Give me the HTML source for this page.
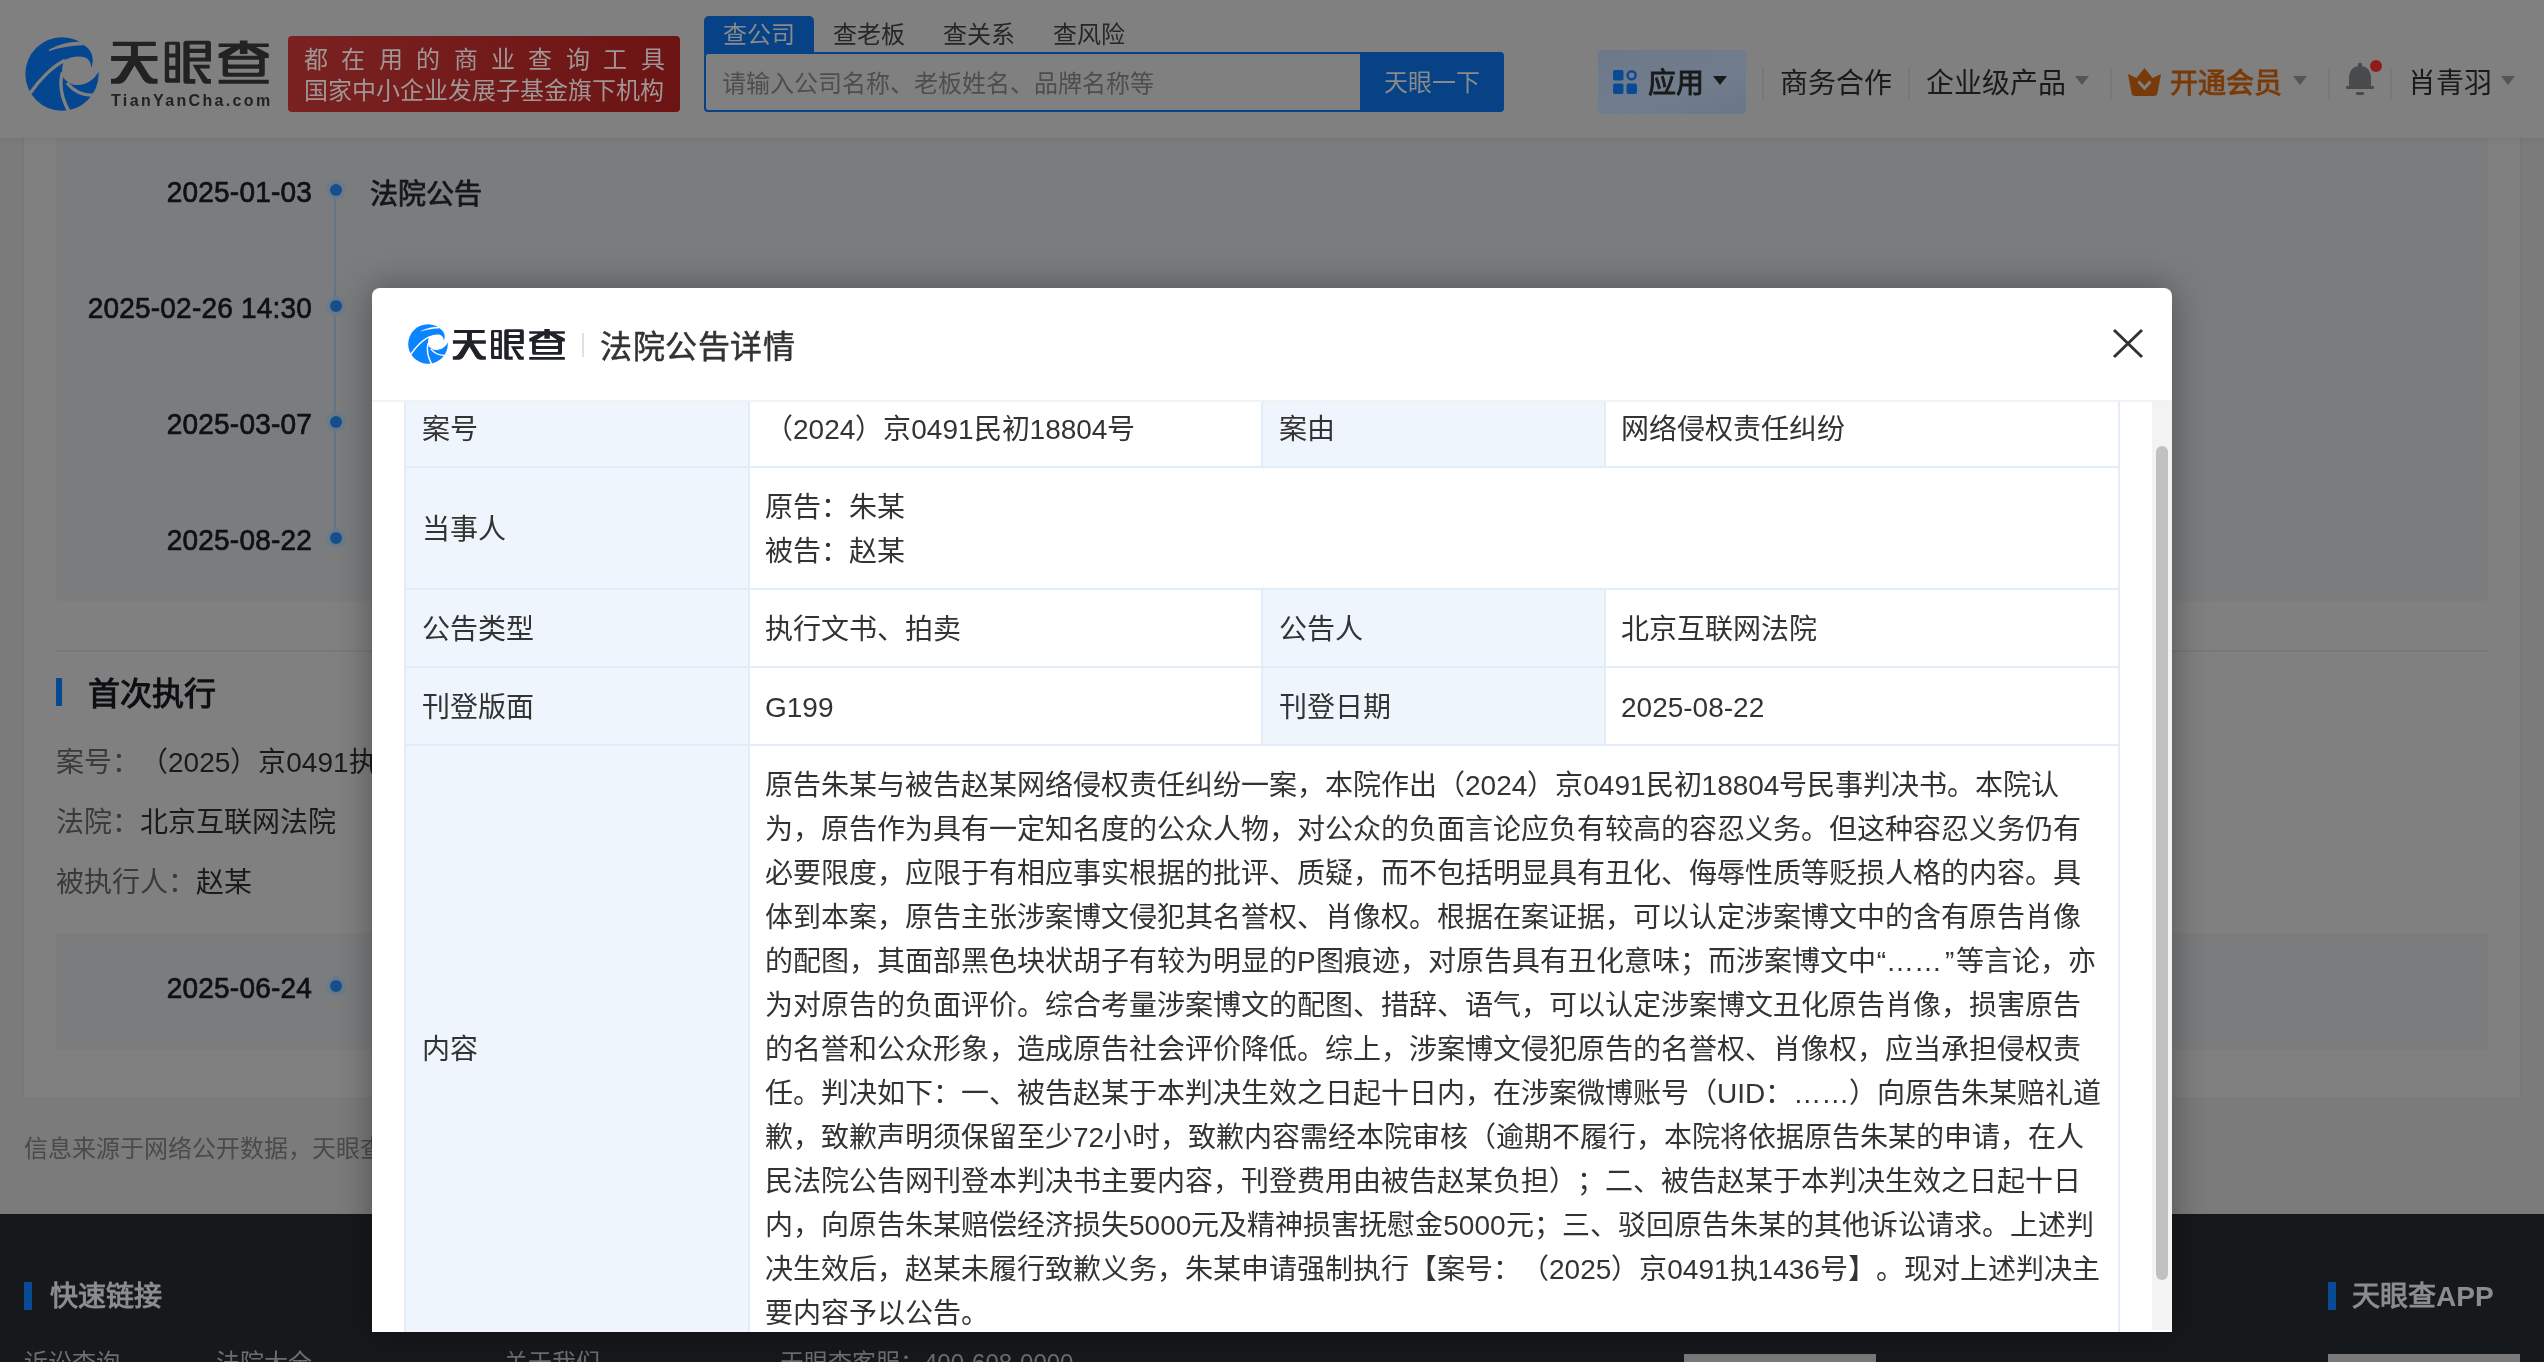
<!DOCTYPE html>
<html lang="zh-CN">
<head>
<meta charset="utf-8">
<style>
html,body{margin:0;padding:0;width:2544px;height:1362px;overflow:hidden;background:#7b7b7b;font-family:"Liberation Sans",sans-serif;text-spacing-trim:space-all;}
.a{position:absolute;white-space:nowrap;}
.a,.cell{will-change:transform}
#hdr{left:0;top:0;width:2544px;height:138px;background:#808080;box-shadow:0 2px 6px rgba(0,0,0,0.06);z-index:2}
#card{left:23px;top:100px;width:2496px;height:997px;background:#808080;border:1px solid #777;}
.tlbox{background:#7b7c7e;border-radius:4px;}
.date{font-size:28px;font-weight:normal;-webkit-text-stroke:0.7px #0f1114;letter-spacing:0.2px;color:#0f1114;text-align:right;line-height:40px;transform:scaleY(1.05);transform-origin:0 22px}
.dot{width:20px;height:20px;border-radius:50%;background:#6b7a89;}
.dot i{position:absolute;left:4px;top:4px;width:12px;height:12px;border-radius:50%;background:#164f8c;}
#footer{left:0;top:1214px;width:2544px;height:148px;background:#16191c;}
#modal{left:372px;top:288px;width:1800px;height:1044px;background:#fff;border-radius:8px 8px 0 0;box-shadow:0 0 36px rgba(0,0,0,0.36);z-index:10;overflow:hidden}
.cell{position:absolute;box-sizing:border-box;font-size:28px;line-height:44px;color:#333;white-space:nowrap}
.lab{background:#eef5fc;}
.hz{z-index:3}
.tri{width:0;height:0;border-left:7px solid transparent;border-right:7px solid transparent;border-top:9px solid #555;}
.dv{top:68px;width:2px;height:31px;background:#787878}
.val{background:#fff;padding-left:15px!important}
</style>
</head>
<body>
<svg width="0" height="0" style="position:absolute">
 <defs>
  <mask id="tycm" maskUnits="userSpaceOnUse" x="0" y="0" width="140" height="140">
   <rect x="0" y="0" width="140" height="140" fill="#fff"/>
   <g fill="#000" stroke="#000">
    <path d="M70 48 C80 42 97 40 105 46 C109 50 110 54 110.5 59 C113 53 115 40 106 30 C101 26 98 24 94 22 L94 16 L126 36 L126 61.5 L122.5 62 C117 76 104 85 90 85 C80 85 71 79 67 71 C66 62 67 54 70 48 Z" stroke="none"/>
    
    <path d="M71 48 C52 57 32 78 19 97" fill="none" stroke-width="4"/>
    <path d="M67 66 C62 85 66 105 77 125" fill="none" stroke-width="4"/>
    <path d="M74 82 C84 94 98 101 114 100" fill="none" stroke-width="4"/>
    <path d="M47 33 C62 25 80 20 97 21.5 L97 24.5 C80 25 63 28 47 33 Z" stroke-width="0.8"/>
   </g>
  </mask>
  <mask id="tycm2" maskUnits="userSpaceOnUse" x="0" y="0" width="140" height="140">
   <rect x="0" y="0" width="140" height="140" fill="#fff"/>
   <g fill="#000" stroke="#000">
    <path d="M70 48 C80 42 97 40 105 46 C109 50 110 54 110.5 59 C113 53 115 40 106 30 C101 26 98 24 94 22 L94 16 L126 36 L126 61.5 L122.5 62 C117 76 104 85 90 85 C80 85 71 79 67 71 C66 62 67 54 70 48 Z" stroke="none"/>
    
    <path d="M71 48 C52 57 32 78 19 97" fill="none" stroke-width="5"/>
    <path d="M67 66 C62 85 66 105 77 125" fill="none" stroke-width="5"/>
    <path d="M74 82 C84 94 98 101 114 100" fill="none" stroke-width="5"/>
    <path d="M47 33 C62 25 80 20 97 21.5 L97 24.5 C80 25 63 28 47 33 Z" stroke-width="2"/>
   </g>
  </mask>
  <g id="tycg2"><circle cx="66.5" cy="68.5" r="55" mask="url(#tycm2)"/></g>
  <symbol id="tyct" viewBox="0 0 254.4 76.3">
   <path fill-rule="evenodd" d="M8.8 8.5 H73.5 V15 H46.5 V30 H76 V37.5 H50 L63 58 C66 62 69 64 72 64 H76 V71.5 H65 C60 71.5 57 69 54 65 L41.5 44 L29 65 C26 69 23 71.5 18 71.5 H6 V64 H10 C13 64 16 62 19 58 L32 37.5 H6.2 V30 H36 V15 H8.8 Z
    M90 8.5 H107 Q110 8.5 110 11.5 V70 H90 Q87 70 87 67 V11.5 Q87 8.5 90 8.5 Z M93.5 13 V26 H103 V13 Z M93.5 32 V44.5 H103 V32 Z M93.5 50.5 V61 Q93.5 63.5 96 63.5 H103 V50.5 Z
    M119 7 H152.5 Q156.5 7 156.5 11 V38 H124.5 V64.5 H133 V71.5 H119 Q115 71.5 115 67.5 V11 Q115 7 119 7 Z M124.5 12.5 V19 H148 V12.5 Z M124.5 25.5 V32 H148 V25.5 Z
    M129 43 H154.5 V48.5 H139.5 L151.5 64.5 H156.5 V71.5 H148 C146 71.5 145 71 144 69.5 Z
    M200 6.5 H211.5 V11 H243.5 V16.5 H224 L243.5 26.5 V33 H237.5 V57 Q237.5 61 233.5 61 H178 Q174 61 174 57 V33 H168 V26.5 L187 16.5 H168 V11 H200 Z
    M184 29.5 L200 19 V27 H211.5 V19 L227 29.5 Z
    M182 35.5 V40.5 Q182 42.5 184 42.5 H227 Q229 42.5 229 40.5 V35.5 Z M182 49 V53 Q182 55 184 55 H227 Q229 55 229 53 V49 Z
    M168 65.5 H243.5 V71.5 H168 Z"/>
  </symbol>
  <g id="tycg"><circle cx="66.5" cy="68.5" r="55" mask="url(#tycm)"/></g>
 </defs>
</svg>
<!-- HEADER -->
<div id="hdr" class="a"></div>
<svg class="a" style="left:25px;top:37px;z-index:3" width="74" height="74" viewBox="11 13 111 111"><use href="#tycg2" fill="#054690"/></svg>
<svg class="a" style="left:107px;top:36px;z-index:3" width="169" height="51"><use href="#tyct" fill="#222"/></svg>
<div class="a hz" style="left:111px;top:90px;font-size:16px;line-height:22px;font-weight:bold;color:#222;letter-spacing:2.35px">TianYanCha.com</div>
<div class="a hz" style="left:288px;top:36px;width:392px;height:76px;border-radius:4px;background:linear-gradient(100deg,#7a2222,#6c1313)"></div>
<div class="a hz" style="left:304px;top:44px;font-size:24px;line-height:32px;color:#a09696;letter-spacing:13.4px">都在用的商业查询工具</div>
<div class="a hz" style="left:304px;top:75px;font-size:24px;line-height:32px;color:#a09696">国家中小企业发展子基金旗下机构</div>
<div class="a hz" style="left:704px;top:16px;width:110px;height:38px;border-radius:5px 5px 0 0;background:#064285"></div>
<div class="a hz" style="left:723px;top:19px;font-size:24px;line-height:32px;color:#8a8a8a">查公司</div>
<div class="a hz" style="left:833px;top:19px;font-size:24px;line-height:32px;color:#262626">查老板</div>
<div class="a hz" style="left:943px;top:19px;font-size:24px;line-height:32px;color:#262626">查关系</div>
<div class="a hz" style="left:1053px;top:19px;font-size:24px;line-height:32px;color:#262626">查风险</div>
<div class="a hz" style="left:704px;top:52px;width:656px;height:60px;box-sizing:border-box;border:2px solid #064285;border-right:none;border-radius:4px 0 0 4px;background:#808080"></div>
<div class="a hz" style="left:722px;top:68px;font-size:24px;line-height:32px;color:#4d4d4d">请输入公司名称、老板姓名、品牌名称等</div>
<div class="a hz" style="left:1360px;top:52px;width:144px;height:60px;border-radius:0 4px 4px 0;background:#064285"></div>
<div class="a hz" style="left:1384px;top:67px;font-size:24px;line-height:32px;color:#8a8a8a">天眼一下</div>
<div class="a hz" style="left:1598px;top:50px;width:148px;height:64px;border-radius:4px;background:linear-gradient(160deg,#6d7889,#717d8c 60%,#6a7789)"></div>
<svg class="a hz" style="left:1613px;top:70px" width="24" height="24" viewBox="0 0 24 24"><rect x="0" y="0" width="10.5" height="10.5" rx="2" fill="#0a4a94"/><circle cx="18.6" cy="5.3" r="4" fill="none" stroke="#0a4a94" stroke-width="2.4"/><rect x="0" y="13.5" width="10.5" height="10.5" rx="2" fill="#0a4a94"/><rect x="13.5" y="13.5" width="10.5" height="10.5" rx="2" fill="#0a4a94"/></svg>
<div class="a hz" style="left:1648px;top:64px;font-size:28px;line-height:40px;font-weight:normal;-webkit-text-stroke:0.9px currentColor;color:#1a1a1a">应用</div>
<div class="a hz tri" style="left:1713px;top:76px;border-top-color:#1a1a1a"></div>
<div class="a hz dv" style="left:1762px"></div>
<div class="a hz" style="left:1780px;top:64px;font-size:28px;line-height:40px;color:#1a1a1a">商务合作</div>
<div class="a hz dv" style="left:1908px"></div>
<div class="a hz" style="left:1926px;top:64px;font-size:28px;line-height:40px;color:#1a1a1a">企业级产品</div>
<div class="a hz tri" style="left:2075px;top:76px"></div>
<div class="a hz dv" style="left:2110px"></div>
<svg class="a hz" style="left:2128px;top:68px" width="33" height="28" viewBox="0 0 33 28"><path d="M0 6 L8.5 10 L16.5 0 L24.5 10 L33 6 L29.5 25 Q29 28 26 28 H7 Q4 28 3.5 25 Z" fill="#783a0b"/><path d="M10.5 13.5 L16.5 20 L22.5 13.5" fill="none" stroke="#808080" stroke-width="3"/></svg>
<div class="a hz" style="left:2170px;top:64px;font-size:28px;line-height:40px;font-weight:normal;-webkit-text-stroke:0.9px currentColor;color:#7a3a07">开通会员</div>
<div class="a hz tri" style="left:2293px;top:76px"></div>
<div class="a hz dv" style="left:2328px"></div>
<svg class="a hz" style="left:2346px;top:63px" width="28" height="33" viewBox="0 0 28 33"><rect x="12" y="0" width="4" height="4" rx="1" fill="#4a4b4d"/><path d="M14 3 C6 3 3 9 3 15 V24 H25 V15 C25 9 22 3 14 3 Z" fill="#4a4b4d"/><rect x="0" y="23" width="28" height="3" rx="1" fill="#4a4b4d"/><rect x="10" y="29" width="8" height="3" rx="1" fill="#4a4b4d"/></svg>
<div class="a hz" style="left:2370px;top:60px;width:12px;height:12px;border-radius:50%;background:#8e1c1c"></div>
<div class="a hz dv" style="left:2390px"></div>
<div class="a hz" style="left:2408px;top:64px;font-size:28px;line-height:40px;color:#1a1a1a">肖青羽</div>
<div class="a hz tri" style="left:2501px;top:76px"></div>


<!-- CONTENT -->
<div id="card" class="a"></div>
<div class="a tlbox" style="left:56px;top:120px;width:2432px;height:481px"></div>
<div class="a" style="left:334px;top:192px;width:2px;height:348px;background:#637587"></div>
<div class="a dot" style="left:326px;top:180px"><i></i></div>
<div class="a dot" style="left:326px;top:296px"><i></i></div>
<div class="a dot" style="left:326px;top:412px"><i></i></div>
<div class="a dot" style="left:326px;top:528px"><i></i></div>
<div class="a date" style="left:0;width:312px;top:173px">2025-01-03</div>
<div class="a date" style="left:0;width:312px;top:289px">2025-02-26 14:30</div>
<div class="a date" style="left:0;width:312px;top:405px">2025-03-07</div>
<div class="a date" style="left:0;width:312px;top:521px">2025-08-22</div>
<div class="a" style="left:370px;top:175px;font-size:28px;line-height:40px;font-weight:normal;-webkit-text-stroke:0.8px currentColor;color:#15171a">法院公告</div>
<div class="a" style="left:56px;top:650px;width:2432px;height:2px;background:#797979"></div>
<div class="a" style="left:56px;top:678px;width:6px;height:28px;background:#044a93"></div>
<div class="a" style="left:88px;top:674px;font-size:32px;line-height:40px;font-weight:bold;color:#0d0f12">首次执行</div>
<div class="a" style="left:56px;top:743px;font-size:28px;line-height:40px;color:#3a3a3a">案号：<span style="color:#1a1a1a">（2025）京0491执1436号</span></div>
<div class="a" style="left:56px;top:803px;font-size:28px;line-height:40px;color:#3a3a3a">法院：<span style="color:#1a1a1a">北京互联网法院</span></div>
<div class="a" style="left:56px;top:863px;font-size:28px;line-height:40px;color:#3a3a3a">被执行人：<span style="color:#1a1a1a">赵某</span></div>
<div class="a tlbox" style="left:56px;top:933px;width:2432px;height:117px"></div>
<div class="a dot" style="left:326px;top:976px"><i></i></div>
<div class="a date" style="left:0;width:312px;top:969px">2025-06-24</div>
<div class="a" style="left:24px;top:1132px;font-size:24px;line-height:34px;color:#4a4a4a">信息来源于网络公开数据，天眼查不对数据的准确性做任何保证</div>

<!-- FOOTER -->
<div id="footer" class="a"></div>
<div class="a" style="left:24px;top:1282px;width:8px;height:28px;background:#0a4a94"></div>
<div class="a" style="left:50px;top:1277px;font-size:28px;line-height:40px;font-weight:bold;color:#8c8c8c">快速链接</div>
<div class="a" style="left:2328px;top:1282px;width:8px;height:28px;background:#0a4a94"></div>
<div class="a" style="left:2352px;top:1277px;font-size:28px;line-height:40px;font-weight:bold;color:#8c8c8c">天眼查APP</div>

<div class="a" style="left:24px;top:1346px;font-size:24px;line-height:34px;color:#6e6e6e">诉讼查询</div>
<div class="a" style="left:216px;top:1346px;font-size:24px;line-height:34px;color:#6e6e6e">法院大全</div>
<div class="a" style="left:504px;top:1346px;font-size:24px;line-height:34px;color:#6e6e6e">关于我们</div>
<div class="a" style="left:780px;top:1346px;font-size:24px;line-height:34px;color:#6e6e6e">天眼查客服：400-608-0000</div>
<div class="a" style="left:1684px;top:1354px;width:192px;height:20px;background:#7a7a7a"></div>
<div class="a" style="left:2328px;top:1354px;width:192px;height:20px;background:#7a7a7a"></div>

<!-- MODAL -->
<div id="modal" class="a">
 <svg class="a" style="left:36px;top:36px" width="40" height="40" viewBox="11 13 111 111"><use href="#tycg" fill="#0a84ff"/></svg>
 <svg class="a" style="left:78px;top:38px" width="120" height="36"><use href="#tyct" fill="#1f2329"/></svg>
 <div class="a" style="left:210px;top:45px;width:2px;height:24px;background:#dde1e6"></div>
 <div class="a" style="left:228px;top:37px;font-size:32px;line-height:44px;font-weight:normal;-webkit-text-stroke:0.5px currentColor;color:#333;letter-spacing:0.6px">法院公告详情</div>
 <svg class="a" style="left:1738px;top:38px" width="36" height="36" viewBox="0 0 36 36"><path d="M4 4L32 31M32 4L4 31" stroke="#333" stroke-width="3" fill="none"/></svg>
 <div class="a" style="left:0;top:112px;width:1800px;height:2px;background:#f2f2f2"></div>
 <div class="a" style="left:0;top:114px;width:1800px;height:930px;overflow:hidden">
  <div class="a" style="left:32px;top:-14px;width:1716px;height:1000px;background:#e3edf7">
   <div class="cell lab" style="left:2px;top:2px;width:342px;height:76px;padding:18px 16px 0 16px">案号</div>
   <div class="cell val" style="left:346px;top:2px;width:511px;height:76px;padding:18px 16px 0 16px">（2024）京0491民初18804号</div>
   <div class="cell lab" style="left:859px;top:2px;width:341px;height:76px;padding:18px 16px 0 16px">案由</div>
   <div class="cell val" style="left:1202px;top:2px;width:512px;height:76px;padding:18px 16px 0 16px">网络侵权责任纠纷</div>
   <div class="cell lab" style="left:2px;top:80px;width:342px;height:120px;padding:40px 16px 0 16px">当事人</div>
   <div class="cell val" style="left:346px;top:80px;width:1368px;height:120px;padding:18px 16px 0 16px">原告：朱某<br>被告：赵某</div>
   <div class="cell lab" style="left:2px;top:202px;width:342px;height:76px;padding:18px 16px 0 16px">公告类型</div>
   <div class="cell val" style="left:346px;top:202px;width:511px;height:76px;padding:18px 16px 0 16px">执行文书、拍卖</div>
   <div class="cell lab" style="left:859px;top:202px;width:341px;height:76px;padding:18px 16px 0 16px">公告人</div>
   <div class="cell val" style="left:1202px;top:202px;width:512px;height:76px;padding:18px 16px 0 16px">北京互联网法院</div>
   <div class="cell lab" style="left:2px;top:280px;width:342px;height:76px;padding:18px 16px 0 16px">刊登版面</div>
   <div class="cell val" style="left:346px;top:280px;width:511px;height:76px;padding:18px 16px 0 16px">G199</div>
   <div class="cell lab" style="left:859px;top:280px;width:341px;height:76px;padding:18px 16px 0 16px">刊登日期</div>
   <div class="cell val" style="left:1202px;top:280px;width:512px;height:76px;padding:18px 16px 0 16px">2025-08-22</div>
   <div class="cell lab" style="left:2px;top:358px;width:342px;height:604px;padding:282px 16px 0 16px">内容</div>
   <div class="cell val" style="left:346px;top:358px;width:1368px;height:604px;padding:18px 16px 0 16px">原告朱某与被告赵某网络侵权责任纠纷一案，本院作出（2024）京0491民初18804号民事判决书。本院认<br>为，原告作为具有一定知名度的公众人物，对公众的负面言论应负有较高的容忍义务。但这种容忍义务仍有<br>必要限度，应限于有相应事实根据的批评、质疑，而不包括明显具有丑化、侮辱性质等贬损人格的内容。具<br>体到本案，原告主张涉案博文侵犯其名誉权、肖像权。根据在案证据，可以认定涉案博文中的含有原告肖像<br>的配图，其面部黑色块状胡子有较为明显的P图痕迹，对原告具有丑化意味；而涉案博文中<span style="margin-left:1px">“</span>……<span style="margin:0 2px 0 3px">”</span>等言论，亦<br>为对原告的负面评价。综合考量涉案博文的配图、措辞、语气，可以认定涉案博文丑化原告肖像，损害原告<br>的名誉和公众形象，造成原告社会评价降低。综上，涉案博文侵犯原告的名誉权、肖像权，应当承担侵权责<br>任。判决如下：一、被告赵某于本判决生效之日起十日内，在涉案微博账号（UID：……）向原告朱某赔礼道<br>歉，致歉声明须保留至少72小时，致歉内容需经本院审核（逾期不履行，本院将依据原告朱某的申请，在人<br>民法院公告网刊登本判决书主要内容，刊登费用由被告赵某负担）；二、被告赵某于本判决生效之日起十日<br>内，向原告朱某赔偿经济损失5000元及精神损害抚慰金5000元；三、驳回原告朱某的其他诉讼请求。上述判<br>决生效后，赵某未履行致歉义务，朱某申请强制执行【案号：（2025）京0491执1436号】。现对上述判决主<br>要内容予以公告。</div>
  </div>
 </div>
 <div class="a" style="left:1780px;top:114px;width:20px;height:928px;background:#f3f3f3"></div>
 <div class="a" style="left:1784px;top:158px;width:12px;height:834px;border-radius:6px;background:#c1c1c1"></div>
</div>
</body>
</html>
